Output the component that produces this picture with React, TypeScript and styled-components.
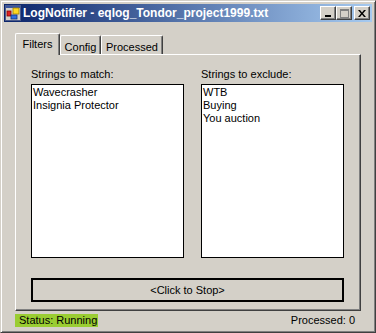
import styled, { createGlobalStyle } from "styled-components";

const GlobalStyle = createGlobalStyle`
  html, body {
    margin: 0;
    padding: 0;
    background: #d4d0c8;
  }
  body {
    font-family: "Liberation Sans", Arial, sans-serif;
    font-size: 11px;
    color: #000;
  }
`;

const Window = styled.div`
  width: 376px;
  height: 333px;
  box-sizing: border-box;
  background: #d4d0c8;
  border: 1px solid;
  border-color: #d4d0c8 #404040 #404040 #d4d0c8;
  box-shadow: inset 1px 1px #fff, inset -1px -1px #808080;
  padding: 3px;
  display: flex;
  flex-direction: column;
`;

const TitleBar = styled.div`
  height: 18px;
  flex-shrink: 0;
  display: flex;
  align-items: center;
  padding: 0 2px 0 1px;
  background: linear-gradient(to right, #0a246a, #a6caf0);
`;

const TitleText = styled.span`
  margin-left: 2px;
  color: #fff;
  font-weight: bold;
  font-size: 12px;
  white-space: nowrap;
`;

const CaptionButtons = styled.div`
  margin-left: auto;
  display: flex;
`;

const CaptionButton = styled.div<{ $gap?: boolean }>`
  width: 16px;
  height: 14px;
  box-sizing: border-box;
  margin-left: ${({ $gap }) => ($gap ? "2px" : "0")};
  background: #d4d0c8;
  border: 1px solid;
  border-color: #fff #404040 #404040 #fff;
  box-shadow: inset -1px -1px #808080;
  display: flex;
  align-items: center;
  justify-content: center;
`;

const Body = styled.div`
  flex: 1;
  display: flex;
  flex-direction: column;
  padding: 11px 11px 0 11px;
`;

const TabStrip = styled.div`
  height: 22px;
  display: flex;
  align-items: flex-end;
  position: relative;
  z-index: 2;
`;

const Tab = styled.div<{ $active?: boolean; $w: number }>`
  width: ${({ $w }) => $w}px;
  height: ${({ $active }) => ($active ? "22px" : "19px")};
  margin-bottom: ${({ $active }) => ($active ? "0" : "1px")};
  box-sizing: border-box;
  background: #d4d0c8;
  border-top: 1px solid #fff;
  border-left: 1px solid #fff;
  border-right: 1px solid #404040;
  box-shadow: inset -1px 0 #808080;
  border-radius: 2px 2px 0 0;
  display: flex;
  justify-content: center;
  padding-top: ${({ $active }) => ($active ? "4px" : "5px")};
  line-height: 13px;
`;

const Panel = styled.div`
  margin-top: -1px;
  width: 346px;
  height: 257px;
  box-sizing: border-box;
  border-top: 1px solid #fff;
  border-left: 1px solid #fff;
  border-right: 1px solid #404040;
  border-bottom: 1px solid #404040;
  box-shadow: inset -1px -1px #808080;
  padding: 13px 0 0 15px;
  display: flex;
  flex-direction: column;
`;

const Columns = styled.div`
  display: grid;
  grid-template-columns: 153px 143px;
  column-gap: 17px;
`;

const Group = styled.div`
  display: flex;
  flex-direction: column;
`;

const Label = styled.div`
  line-height: 13px;
  height: 13px;
  margin-bottom: 3px;
  white-space: nowrap;
`;

const ListBox = styled.div`
  height: 174px;
  box-sizing: border-box;
  border: 1px solid #000;
  background: #fff;
  padding: 1px;
`;

const ListItem = styled.div`
  line-height: 13px;
  white-space: nowrap;
`;

const StopButton = styled.div`
  margin-top: 20px;
  width: 313px;
  height: 24px;
  box-sizing: border-box;
  border: 2px solid #000;
  background: #d4d0c8;
  display: flex;
  align-items: center;
  justify-content: center;
`;

const StatusBar = styled.div`
  height: 18px;
  width: 346px;
  display: flex;
  align-items: center;
  justify-content: space-between;
  padding-right: 6px;
  box-sizing: border-box;
`;

const StatusBadge = styled.div`
  height: 13px;
  line-height: 13px;
  width: 83px;
  box-sizing: border-box;
  padding-left: 4px;
  background: #9acd32;
  white-space: nowrap;
`;

const AppIcon = () => (
  <svg width="16" height="16" viewBox="0 0 16 16">
    <rect x="0.5" y="0.5" width="15" height="15" fill="#d4d0c8" stroke="#4a5a8a" />
    <rect x="1" y="1" width="14" height="2" fill="#3a56a0" />
    <rect x="8" y="3" width="6" height="6" fill="#ffd820" stroke="#a08000" strokeWidth="0.8" />
    <rect x="2" y="6" width="4" height="5" fill="#e02020" stroke="#800000" strokeWidth="0.8" />
    <rect x="6" y="10" width="6" height="4" fill="#3070e0" stroke="#103080" strokeWidth="0.8" />
  </svg>
);

const MinGlyph = () => (
  <svg width="8" height="7" viewBox="0 0 8 7">
    <rect x="1" y="5" width="6" height="2" fill="#000" />
  </svg>
);

const MaxGlyph = () => (
  <svg width="9" height="9" viewBox="0 0 9 9">
    <rect x="0.5" y="0.5" width="8" height="8" fill="none" stroke="#808080" />
    <rect x="0" y="0" width="9" height="2" fill="#808080" />
  </svg>
);

const CloseGlyph = () => (
  <svg width="8" height="7" viewBox="0 0 8 7">
    <path d="M0 0h2l2 2.5L6 0h2L5 3.5 8 7H6L4 4.5 2 7H0l3-3.5z" fill="#000" />
  </svg>
);

const matches = ["Wavecrasher", "Insignia Protector"];
const excludes = ["WTB", "Buying", "You auction"];

export default function App() {
  return (
    <>
      <GlobalStyle />
      <Window>
        <TitleBar>
          <AppIcon />
          <TitleText>LogNotifier - eqlog_Tondor_project1999.txt</TitleText>
          <CaptionButtons>
            <CaptionButton>
              <MinGlyph />
            </CaptionButton>
            <CaptionButton>
              <MaxGlyph />
            </CaptionButton>
            <CaptionButton $gap>
              <CloseGlyph />
            </CaptionButton>
          </CaptionButtons>
        </TitleBar>

        <Body>
          <TabStrip>
            <Tab $active $w={45}>Filters</Tab>
            <Tab $w={41}>Config</Tab>
            <Tab $w={62}>Processed</Tab>
          </TabStrip>

          <Panel>
            <Columns>
              <Group>
                <Label>Strings to match:</Label>
                <ListBox>
                  {matches.map((m) => (
                    <ListItem key={m}>{m}</ListItem>
                  ))}
                </ListBox>
              </Group>
              <Group>
                <Label>Strings to exclude:</Label>
                <ListBox>
                  {excludes.map((m) => (
                    <ListItem key={m}>{m}</ListItem>
                  ))}
                </ListBox>
              </Group>
            </Columns>
            <StopButton>&lt;Click to Stop&gt;</StopButton>
          </Panel>

          <StatusBar>
            <StatusBadge>Status: Running</StatusBadge>
            <span>Processed: 0</span>
          </StatusBar>
        </Body>
      </Window>
    </>
  );
}
